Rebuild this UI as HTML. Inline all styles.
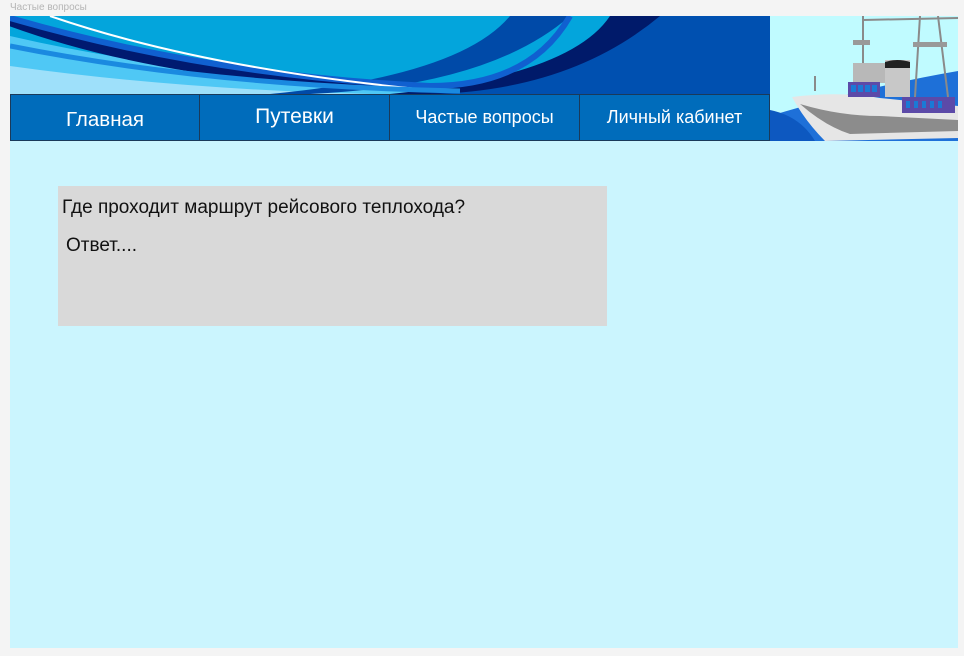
<!DOCTYPE html>
<html><head><meta charset="utf-8"><style>
*{margin:0;padding:0;box-sizing:border-box}
body{width:964px;height:656px;background:#f4f4f4;position:relative;overflow:hidden;font-family:"Liberation Sans","DejaVu Sans",sans-serif}
.lbl{position:absolute;left:10px;top:2px;font-size:10px;color:#b5b5b5}
.frame{position:absolute;left:10px;top:16px;width:948px;height:632px;background:#cbf5fe}
.banner{position:absolute;left:0;top:0;width:760px;height:78px;overflow:hidden}
.nav{position:absolute;left:0;top:78px;width:760px;height:47px;display:flex}
.nav div{width:190px;height:47px;background:#006cbb;border:1px solid #1a3a5a;border-left:none;color:#fff;display:flex;align-items:center;justify-content:center;white-space:nowrap}
.nav div:first-child{border-left:1px solid #1a3a5a}
.ship{position:absolute;left:760px;top:0;width:188px;height:125px;background:#c0fbff;overflow:hidden}
.box{position:absolute;left:48px;top:170px;width:549px;height:140px;background:#d9d9d9;font-size:19px;color:#111}
</style></head><body>
<div class="lbl">Частые вопросы</div>
<div class="frame">
<div class="banner"><svg width="760" height="78" viewBox="0 0 760 78">
<rect width="760" height="78" fill="#03a5dc"/>
<path d="M0 20 Q300 90 760 60 L760 78 L0 78Z" fill="#4fc8f5"/>
<path d="M0 50 Q250 85 560 78 L0 78Z" fill="#9ee0fa"/>
<path d="M560 0 L760 0 L760 78 L420 78 Q560 60 640 0Z" fill="#0050b0"/>
<path d="M500 0 L560 0 Q480 70 300 78 L260 78 Q450 60 500 0Z" fill="#004aa8"/>
<path d="M600 0 L650 0 Q560 75 420 78 L380 78 Q560 60 600 0Z" fill="#001a6a"/>
<path d="M0 5 Q150 60 380 70" stroke="#001a70" stroke-width="10" fill="none"/>
<path d="M0 2 Q200 60 420 70 Q520 70 560 0" stroke="#1060d0" stroke-width="6" fill="none"/>
<path d="M40 0 Q200 55 440 76" stroke="#fff" stroke-width="2" fill="none"/>
<path d="M0 30 Q200 70 450 75" stroke="#1a8ae0" stroke-width="5" fill="none"/>
</svg></div>
<div class="nav"><div style="font-size:20.5px;padding-top:4px">Главная</div><div style="font-size:21px;padding-bottom:2px">Путевки</div><div style="font-size:18px">Частые вопросы</div><div style="font-size:18px">Личный кабинет</div></div>
<div class="ship"><svg width="188" height="125" viewBox="0 0 188 125">
<path d="M0 100 Q100 70 188 55 L188 125 L0 125Z" fill="#1e70d8"/>
<path d="M0 94 Q30 100 45 125 L0 125Z" fill="#0d58c0"/>
<path d="M22 81 Q70 75 110 82 L188 90 L188 122 L55 125 Q35 105 22 81Z" fill="#e6e6e6"/>
<path d="M30 88 Q70 100 110 100 L188 104 L188 115 L80 118 Q55 110 30 88Z" fill="#8c8c8c"/>
<rect x="83" y="47" width="32" height="20" fill="#b8b8b8"/>
<rect x="78" y="66" width="32" height="15" fill="#5c4aa8"/>
<rect x="81" y="69" width="5" height="7" fill="#1a7ad6"/><rect x="88" y="69" width="5" height="7" fill="#1a7ad6"/><rect x="95" y="69" width="5" height="7" fill="#1a7ad6"/><rect x="102" y="69" width="5" height="7" fill="#1a7ad6"/>
<rect x="115" y="44" width="25" height="37" fill="#c8c8c8"/>
<path d="M115 52 L115 46 Q127 42 140 46 L140 52Z" fill="#222"/>
<rect x="132" y="81" width="53" height="16" fill="#5c4aa8"/>
<rect x="136" y="85" width="4" height="7" fill="#1a7ad6"/><rect x="144" y="85" width="4" height="7" fill="#1a7ad6"/><rect x="152" y="85" width="4" height="7" fill="#1a7ad6"/><rect x="160" y="85" width="4" height="7" fill="#1a7ad6"/><rect x="168" y="85" width="4" height="7" fill="#1a7ad6"/>
<path d="M93 0 L93 47 M150 0 L145 81 M168 0 L178 81 M93 4 L188 2 M45 75 L45 60" stroke="#8a8a8a" stroke-width="2" fill="none"/>
<rect x="83" y="24" width="17" height="5" fill="#999"/>
<rect x="143" y="26" width="34" height="5" fill="#999"/>
</svg></div>
<div class="box"><div style="position:absolute;left:4px;top:11px">Где проходит маршрут рейсового теплохода?</div><div style="position:absolute;left:8px;top:49px">Ответ....</div></div>
</div>
</body></html>
